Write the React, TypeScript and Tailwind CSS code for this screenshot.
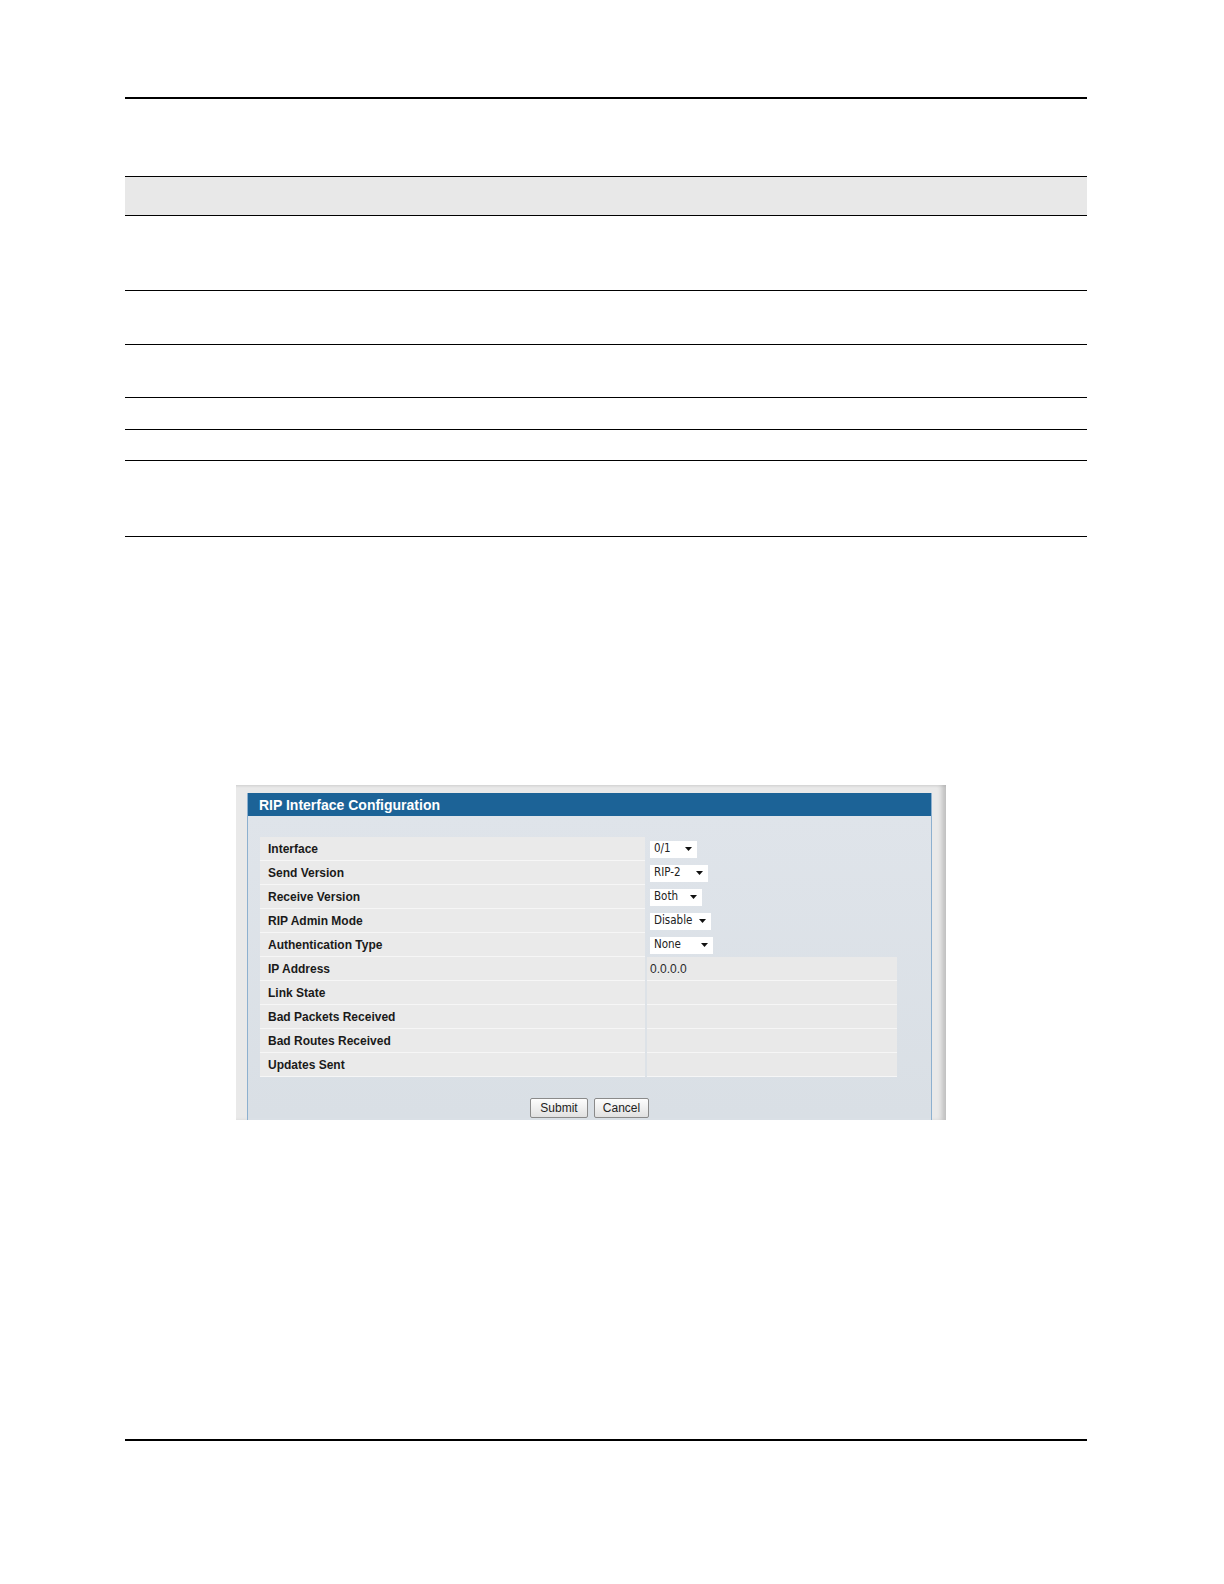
import React from "react";

const rowsSelect: { label: string; value: string; w: string }[] = [
  { label: "Interface", value: "0/1", w: "w-[47px]" },
  { label: "Send Version", value: "RIP-2", w: "w-[58px]" },
  { label: "Receive Version", value: "Both", w: "w-[52px]" },
  { label: "RIP Admin Mode", value: "Disable", w: "w-[61px]" },
  { label: "Authentication Type", value: "None", w: "w-[63px]" },
];

const rowsStatic: { label: string; value: string }[] = [
  { label: "IP Address", value: "0.0.0.0" },
  { label: "Link State", value: "" },
  { label: "Bad Packets Received", value: "" },
  { label: "Bad Routes Received", value: "" },
  { label: "Updates Sent", value: "" },
];

function Arrow() {
  return (
    <svg width="7" height="4" viewBox="0 0 7 4" className="shrink-0">
      <path d="M0 0 L7 0 L3.5 4 Z" fill="#111" />
    </svg>
  );
}

export default function App() {
  return (
    <div
      className="w-[1224px] h-[1584px] bg-white overflow-hidden"
      style={{ fontFamily: '"Liberation Sans", Arial, sans-serif' }}
    >
      <div className="pt-[97px] pl-[125px] pr-[137px]">
        <div className="h-[2px] bg-black" />

        <div className="mt-[77px] border-t border-black">
          <div className="h-[39px] bg-[#e8e8e8] border-b border-black" />
          <div className="h-[75px] border-b border-black" />
          <div className="h-[54px] border-b border-black" />
          <div className="h-[53px] border-b border-black" />
          <div className="h-[32px] border-b border-black" />
          <div className="h-[31px] border-b border-black" />
          <div className="h-[76px] border-b border-black" />
        </div>
      </div>

      <div className="mt-[248px] ml-[236px] w-[710px] h-[335px] overflow-hidden bg-[#e9e9e9] pl-[11px] pr-[14px] pt-[8px] shadow-[inset_-6px_0_5px_-2px_rgba(0,0,0,0.18),inset_0_3px_3px_-2px_rgba(0,0,0,0.08)]">
        <div className="h-[400px] flex flex-col bg-[#dae0e6] border-l border-r border-[#8db0cf]">
          <div className="h-[23px] bg-[#1c6397] flex items-center pl-[11px]">
            <span className="text-white font-bold text-[14px] leading-none">
              RIP Interface Configuration
            </span>
          </div>
          <div className="pt-[21px] pl-[12px] pr-[34px] bg-gradient-to-b from-[#dfe4ea] to-[#d9dfe5]">
            <div className="flex flex-col">
              {rowsSelect.map((r) => (
                <div key={r.label} className="h-[24px] flex items-center">
                  <div className="w-[385px] h-full bg-[#eaeaea] border-b border-[#f6f6f6] flex items-center pl-[8px]">
                    <span className="text-[12px] font-bold text-[#1a1a1a]">{r.label}</span>
                  </div>
                  <div className="pl-[5px] flex items-center">
                    <div
                      className={`${r.w} h-[17px] bg-white flex items-center justify-between pl-[4px] pr-[5px] text-[#222]`}
                      style={{ fontFamily: '"DejaVu Sans Condensed", "DejaVu Sans", sans-serif' }}
                    >
                      <span className="text-[11.5px]">{r.value}</span>
                      <Arrow />
                    </div>
                  </div>
                </div>
              ))}
              {rowsStatic.map((r) => (
                <div key={r.label} className="h-[24px] flex">
                  <div className="w-[385px] h-full bg-[#eaeaea] border-b border-[#f6f6f6] flex items-center pl-[8px]">
                    <span className="text-[12px] font-bold text-[#1a1a1a]">{r.label}</span>
                  </div>
                  <div className="w-[2px] bg-[#dde2e7]" />
                  <div className="flex-1 h-full bg-[#e9e9e9] border-b border-[#f6f6f6] flex items-center pl-[3px]">
                    <span className="text-[12px] text-[#2a2a2a]">{r.value}</span>
                  </div>
                </div>
              ))}
            </div>
            <div className="mt-[21px] flex justify-center gap-[6px] pl-[22px]">
              <button className="w-[58px] h-[20px] border border-[#8a8a8a] rounded-[2px] bg-gradient-to-b from-[#fdfdfd] to-[#e1e1e1] text-[12px] text-[#222] leading-none">
                Submit
              </button>
              <button className="w-[55px] h-[20px] border border-[#8a8a8a] rounded-[2px] bg-gradient-to-b from-[#fdfdfd] to-[#e1e1e1] text-[12px] text-[#222] leading-none">
                Cancel
              </button>
            </div>
          </div>
        </div>
      </div>

      <div className="mt-[319px] ml-[125px] mr-[137px] h-[2px] bg-black" />
    </div>
  );
}
